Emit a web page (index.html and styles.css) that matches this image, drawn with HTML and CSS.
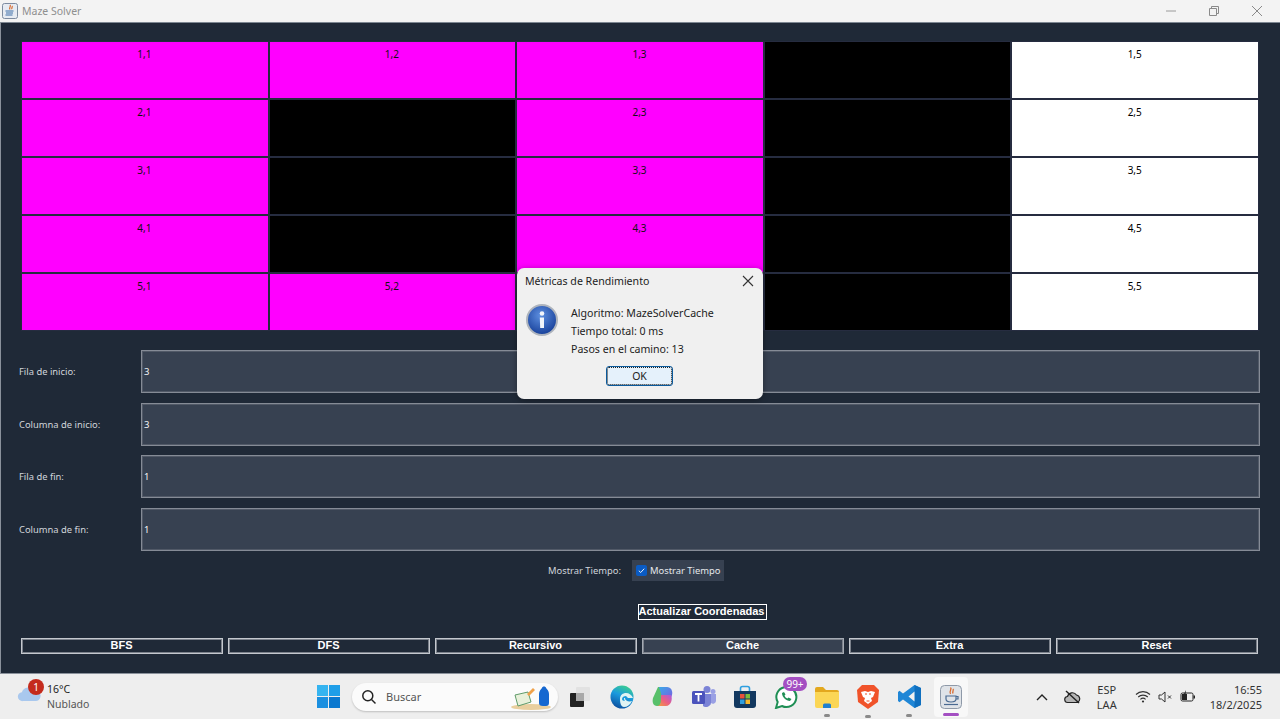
FILE: index.html
```html
<!DOCTYPE html>
<html lang="es">
<head>
  <meta charset="UTF-8">
  <title>Maze Solver</title>
  <link rel="stylesheet" href="styles.css">
</head>
<body>

  <header class="titlebar">
    <svg class="app-icon" width="16" height="16" viewBox="0 0 16 16">
      <rect x="0.500" y="0.500" width="15" height="15" rx="2" fill="#e6ebf2" stroke="#7d8ba0"/>
      <path d="M8 2c1.500 1.500-1.500 2.500 0 4.500M10 3c1 1-1 2 0 3.200" fill="none" stroke="#d9682a" stroke-width="1.200"/>
      <path d="M3.500 8h8M4 10h7M3.500 12h7" stroke="#3c6ea8" stroke-width="1.100"/>
    </svg>
    <span class="app-title">Maze Solver</span>
    <div class="win-controls">
      <svg width="12" height="12" viewBox="0 0 12 12"><path d="M1 6h10" stroke="#9a9a9a"/></svg>
      <svg width="12" height="12" viewBox="0 0 12 12"><path d="M1.500 3.500h7v7h-7zM3.500 3.500v-2h7v7h-2" fill="none" stroke="#8a8a8a"/></svg>
      <svg width="12" height="12" viewBox="0 0 12 12"><path d="M1 1l10 10M11 1L1 11" stroke="#8a8a8a"/></svg>
    </div>
  </header>

  <main class="window">
    <div class="maze">
      <div class="cell path">1,1</div>
      <div class="cell path">1,2</div>
      <div class="cell path">1,3</div>
      <div class="cell wall"></div>
      <div class="cell open">1,5</div>

      <div class="cell path">2,1</div>
      <div class="cell wall"></div>
      <div class="cell path">2,3</div>
      <div class="cell wall"></div>
      <div class="cell open">2,5</div>

      <div class="cell path">3,1</div>
      <div class="cell wall"></div>
      <div class="cell path">3,3</div>
      <div class="cell wall"></div>
      <div class="cell open">3,5</div>

      <div class="cell path">4,1</div>
      <div class="cell wall"></div>
      <div class="cell path">4,3</div>
      <div class="cell wall"></div>
      <div class="cell open">4,5</div>

      <div class="cell path">5,1</div>
      <div class="cell path">5,2</div>
      <div class="cell path"></div>
      <div class="cell wall"></div>
      <div class="cell open">5,5</div>
    </div>

    <div class="coords">
      <label>Fila de inicio:</label>
      <div class="field">3</div>
      <label>Columna de inicio:</label>
      <div class="field">3</div>
      <label>Fila de fin:</label>
      <div class="field">1</div>
      <label>Columna de fin:</label>
      <div class="field">1</div>
    </div>

    <div class="time-row">
      <span>Mostrar Tiempo:</span>
      <div class="check-box">
        <svg width="11" height="11" viewBox="0 0 11 11">
          <rect width="11" height="11" rx="2" fill="#0a5bc4"/>
          <path d="M2.800 5.700l1.900 1.800 3.500-3.800" fill="none" stroke="#e8f0fb"/>
        </svg>
        <span>Mostrar Tiempo</span>
      </div>
    </div>

    <div class="update-row">
      <button class="btn update-btn">Actualizar Coordenadas</button>
    </div>

    <div class="actions">
      <button class="btn">BFS</button>
      <button class="btn">DFS</button>
      <button class="btn">Recursivo</button>
      <button class="btn hover">Cache</button>
      <button class="btn">Extra</button>
      <button class="btn">Reset</button>
    </div>
  </main>

  <div class="dialog">
    <div class="dialog-title">
      <span>Métricas de Rendimiento</span>
      <svg width="12" height="12" viewBox="0 0 12 12"><path d="M1 1l10 10M11 1L1 11" stroke="#333" stroke-width="1.100"/></svg>
    </div>
    <div class="dialog-body">
      <svg class="info-icon" width="32" height="32" viewBox="0 0 32 32">
        <defs>
          <radialGradient id="infoBlue" cx="45%" cy="35%" r="70%">
            <stop offset="0" stop-color="#5d8fe0"/>
            <stop offset="1" stop-color="#123a94"/>
          </radialGradient>
        </defs>
        <circle cx="16" cy="16" r="15" fill="url(#infoBlue)" stroke="#aeb4bd" stroke-width="2"/>
        <circle cx="16" cy="9.500" r="2.300" fill="#f2f5fa"/>
        <path d="M13.800 13.500h4.200v10.500h-3.800z" fill="#f2f5fa"/>
      </svg>
      <div class="dialog-text">
        <p>Algoritmo: MazeSolverCache</p>
        <p>Tiempo total: 0 ms</p>
        <p>Pasos en el camino: 13</p>
      </div>
    </div>
    <button class="ok-btn">OK</button>
  </div>

  <footer class="taskbar">
    <div class="weather">
      <svg class="cloud" width="24" height="16" viewBox="0 0 26 18">
        <path d="M6 17a5 5 0 0 1-1-10 8 8 0 0 1 14-2 6 6 0 0 1 2 12z" fill="#a9c8ee"/>
      </svg>
      <span class="weather-badge">1</span>
      <div class="weather-text">
        <div class="temp">16°C</div>
        <div class="sky">Nublado</div>
      </div>
    </div>

    <div class="apps">
      <svg class="start" width="23" height="23" viewBox="0 0 23 23">
        <rect width="11" height="11" fill="#35b4f0"/>
        <rect x="12" width="11" height="11" fill="#1f9ee8"/>
        <rect y="12" width="11" height="11" fill="#1a8fe0"/>
        <rect x="12" y="12" width="11" height="11" fill="#0b78cf"/>
      </svg>

      <div class="search">
        <svg width="16" height="16" viewBox="0 0 16 16">
          <circle cx="6.800" cy="6.800" r="5" fill="none" stroke="#222" stroke-width="1.500"/>
          <path d="M10.500 10.500l4 4" stroke="#222" stroke-width="1.500"/>
        </svg>
        <span>Buscar</span>
        <svg class="search-art" width="44" height="26" viewBox="0 0 44 26">
          <ellipse cx="20" cy="23" rx="20" ry="3" fill="#e9cf9f"/>
          <path d="M4 11l13-3 3 10-13 4z" fill="#e8f0da" stroke="#5f9b6a"/>
          <path d="M16 10l6-6 2 2-6 6z" fill="#f0a24a"/>
          <path d="M32 22c-3 0-4-1-4-3v-9c0-3 2-5 3-6 0-2 4-2 4 0 1 1 3 3 3 6v9c0 2-1 3-3 3z" fill="#1668d0"/>
        </svg>
      </div>

      <svg class="task-view" width="24" height="24" viewBox="0 0 24 24">
        <rect x="8" y="2" width="14" height="14" rx="1" fill="#e2e2e2"/>
        <rect x="2" y="8" width="14" height="14" rx="1" fill="#222"/>
        <rect x="8" y="8" width="8" height="8" fill="#a8a8a8"/>
      </svg>

      <svg width="24" height="24" viewBox="0 0 24 24">
        <defs>
          <linearGradient id="edgeGrad" x1="0.700" y1="0" x2="0.300" y2="1">
            <stop offset="0" stop-color="#3ccf8e"/>
            <stop offset="0.450" stop-color="#1a9ade"/>
            <stop offset="1" stop-color="#0c4f9e"/>
          </linearGradient>
        </defs>
        <circle cx="12" cy="12" r="11.500" fill="url(#edgeGrad)"/>
        <path d="M10 14c0-4 3-6 6-6 3 0 6 2 7 5h-8c0 3 4 4 7 3-2 4-5 6-8 6-3 0-4-4-4-8z" fill="#dff3f3"/>
        <path d="M12 14c0-2 2-3 4-3l2 2h-4c0 1 0 2 1 3-2 0-3-1-3-2z" fill="#1a9ade"/>
      </svg>

      <svg width="24" height="24" viewBox="0 0 24 24">
        <defs>
          <linearGradient id="copA" x1="0" y1="0" x2="1" y2="1">
            <stop offset="0" stop-color="#3aa9e8"/>
            <stop offset="1" stop-color="#7b5be0"/>
          </linearGradient>
          <linearGradient id="copB" x1="0" y1="1" x2="1" y2="0">
            <stop offset="0" stop-color="#f3a13a"/>
            <stop offset="0.500" stop-color="#ec5f80"/>
            <stop offset="1" stop-color="#a85ae0"/>
          </linearGradient>
        </defs>
        <path d="M7 2h8l-3 10-3 9H6C2 21 1 17 2 13z" fill="#58c06a"/>
        <path d="M8 2h8c4 0 6 4 5 8l-2 5h-7z" fill="url(#copA)"/>
        <path d="M10 10h10c2 4 0 11-5 11H6c4 0 4-4 4-11z" fill="url(#copB)"/>
      </svg>

      <svg width="24" height="24" viewBox="0 0 24 24">
        <circle cx="15" cy="4.500" r="3.500" fill="#7b83d6"/>
        <circle cx="21" cy="6.500" r="2.500" fill="#9aa0e4"/>
        <path d="M11 9h8v9a5 5 0 0 1-8 3z" fill="#7b83d6"/>
        <path d="M19 9h5v7a3 3 0 0 1-5 2z" fill="#9aa0e4"/>
        <rect x="0" y="6" width="13" height="13" rx="1.500" fill="#4b53bc"/>
        <path d="M3 9h7M6.500 9v7.500" stroke="#fff" stroke-width="1.800"/>
      </svg>

      <svg width="24" height="24" viewBox="0 0 24 24">
        <path d="M7.500 6V3.500a2 2 0 0 1 2-2h5a2 2 0 0 1 2 2V6" fill="none" stroke="#2f9fe0" stroke-width="1.600"/>
        <path d="M1 6h22v14a3 3 0 0 1-3 3H4a3 3 0 0 1-3-3z" fill="#12385f"/>
        <rect x="7" y="9" width="4.500" height="4.500" fill="#e8503a"/>
        <rect x="12.500" y="9" width="4.500" height="4.500" fill="#7cba3a"/>
        <rect x="7" y="14.500" width="4.500" height="4.500" fill="#2f9fe0"/>
        <rect x="12.500" y="14.500" width="4.500" height="4.500" fill="#f5b82e"/>
      </svg>

      <div class="whatsapp">
        <svg width="24" height="24" viewBox="0 0 24 24">
          <path d="M2 23l1.700-6A10 10 0 1 1 8 21z" fill="#fff" stroke="#1f8f55" stroke-width="2"/>
          <path d="M8 8c0 4 4 8 8 8l1.500-2-3-1.500-1 1c-1.500-.5-2.500-1.500-3-3l1-1L10 7z" fill="#1f8f55"/>
        </svg>
        <span class="count-badge">99+</span>
      </div>

      <div class="pinned">
        <svg width="24" height="22" viewBox="0 0 24 22">
          <path d="M0 3a2 2 0 0 1 2-2h6l3 3h11a2 2 0 0 1 2 2v3H0z" fill="#e3a81e"/>
          <path d="M0 6h24v14a2 2 0 0 1-2 2H2a2 2 0 0 1-2-2z" fill="#fbd655"/>
          <path d="M8 22v-3a1.500 1.500 0 0 1 1.500-1.500h5A1.500 1.500 0 0 1 16 19v3z" fill="#1f7fd0"/>
        </svg>
      </div>

      <div class="pinned">
        <svg width="22" height="25" viewBox="0 0 22 25">
          <path d="M5 1h12l3 3 2 2-1 12-10 7-10-7L0 6l2-2z" fill="#f0532a"/>
          <path d="M4 8l4-1 3 1 3-1 4 1-2 5-2 1 1 3-4 3-4-3 1-3-2-1z" fill="#fff"/>
          <path d="M8 10h2M12 10h2M9.500 17h3" stroke="#f0532a" stroke-width="1.200"/>
        </svg>
      </div>

      <div class="pinned">
        <svg width="23" height="23" viewBox="0 0 23 23">
          <path d="M16.500 0L23 3v17l-6.500 3L5 14.500l-3.500 2.700L0 16V7l1.500-1.200L5 8.500z" fill="#1f86d6"/>
          <path d="M16.500 0L23 3v17l-6.500 3z" fill="#0f6fbf"/>
          <path d="M16.500 6.500l-6 5 6 5z" fill="#f0f0f0"/>
        </svg>
      </div>

      <div class="active-app">
        <svg width="22" height="24" viewBox="0 0 22 24">
          <rect x="0.500" y="0.500" width="21" height="23" rx="4" fill="#dfe3e8" stroke="#8e99a8"/>
          <path d="M10.500 2.500c2 2-2 3.500 0 6.500M13 4c1 1.200-1 2.500 0 4.500" fill="none" stroke="#d9682a" stroke-width="1.300"/>
          <path d="M6 11h10v3c0 2-2 3-5 3s-5-1-5-3zM16 11.500h2v2.500h-2" fill="none" stroke="#4a6a92" stroke-width="1.200"/>
          <path d="M4 19.500h14" stroke="#4a6a92" stroke-width="1.200"/>
        </svg>
      </div>
    </div>

    <div class="tray">
      <svg width="12" height="8" viewBox="0 0 12 8"><path d="M1 7l5-5 5 5" fill="none" stroke="#222" stroke-width="1.400"/></svg>
      <svg class="tray-cloud" width="17" height="14" viewBox="0 0 17 14">
        <path d="M4 12.500a3 3 0 0 1-.5-6 5 5 0 0 1 9-1.500 4 4 0 0 1 1 7.500z" fill="#b5b5b5" stroke="#222" stroke-width="1.200"/>
        <path d="M2 1l13 12" stroke="#222" stroke-width="1.400"/>
      </svg>
      <div class="lang">ESP<br>LAA</div>
      <svg class="wifi" width="16" height="13" viewBox="0 0 16 13">
        <path d="M1 4.500a10 10 0 0 1 14 0M3.200 7a7 7 0 0 1 9.600 0M5.400 9.300a4 4 0 0 1 5.200 0" fill="none" stroke="#333" stroke-width="1.100"/>
        <circle cx="8" cy="11.500" r="1.100" fill="#333"/>
      </svg>
      <svg class="volume" width="15" height="12" viewBox="0 0 15 12">
        <path d="M1 4h2.500L7 1v10L3.500 8H1z" fill="none" stroke="#333"/>
        <path d="M10 4.500l3 3M13 4.500l-3 3" stroke="#333"/>
      </svg>
      <svg class="battery" width="16" height="13" viewBox="0 0 16 13">
        <rect x="1" y="3" width="12" height="8" rx="1.500" fill="none" stroke="#222"/>
        <rect x="2" y="4" width="5" height="6" fill="#222"/>
        <rect x="13.500" y="5.500" width="1.500" height="3" fill="#222"/>
        <path d="M6 0L3.500 5h3L5 9" fill="#222"/>
      </svg>
      <div class="clock">16:55<br>18/2/2025</div>
    </div>
  </footer>

</body>
</html>
```

FILE: styles.css
```css
* {
  margin: 0;
  padding: 0;
  box-sizing: border-box;
}

body {
  width: 1280px;
  height: 719px;
  overflow: hidden;
  position: relative;
  background-color: #eeeeee;
  font-family: "Noto Sans", sans-serif;
  display: flex;
  flex-direction: column;
}

.titlebar {
  height: 22px;
  background-color: #f3f3f3;
  display: flex;
  align-items: center;
  padding-left: 2px;
  flex-shrink: 0;
}

.app-title {
  margin-left: 4px;
  font-size: 10.5px;
  color: #8f8f8f;
}

.win-controls {
  margin-left: auto;
  display: flex;
  gap: 31px;
  padding-right: 17px;
}

.window {
  height: 652px;
  flex-shrink: 0;
  background-color: #1f2937;
  border: 1px solid #8a919b;
  border-top-color: #7e8792;
  border-right: none;
  padding: 18px 0 0 18px;
}

.maze {
  margin-left: 2px;
  width: 1238px;
  height: 290px;
  padding: 1px;
  display: grid;
  grid-template-columns: repeat(5, 1fr);
  grid-template-rows: repeat(5, 1fr);
  gap: 2px;
  background-color: #262c40;
}

.cell {
  text-align: center;
  font-size: 10px;
  line-height: 12px;
  padding: 6px 1px 0 0;
  color: #111;
}

.cell.path {
  background-color: #ff00ff;
}

.cell.wall {
  background-color: #000000;
}

.cell.open {
  background-color: #ffffff;
  color: #000000;
}

.coords {
  margin-top: 19px;
  width: 1241px;
  display: grid;
  grid-template-columns: 122px 1fr;
  row-gap: 9.5px;
  align-items: center;
}

.coords label {
  font-size: 9.4px;
  color: #d1d5db;
}

.field {
  height: 43px;
  background-color: #374151;
  border: 1px solid #858b96;
  box-shadow: inset 0 0 0 1px #515967;
  color: #f3f4f6;
  font-size: 9.5px;
  line-height: 41px;
  padding-left: 2px;
}

.time-row {
  margin-top: 9.5px;
  display: flex;
  justify-content: center;
  align-items: center;
  gap: 11px;
  padding-right: 27px;
  font-size: 9.4px;
  color: #d1d5db;
  white-space: nowrap;
}

.check-box {
  height: 21px;
  width: 92px;
  background-color: #374151;
  display: flex;
  align-items: center;
  gap: 3px;
  padding-left: 4px;
  color: #e5e7eb;
}

.btn {
  height: 16px;
  background-color: #1f2937;
  border: 1px solid #c4c8ce;
  box-shadow: inset 0 0 0 1px #7b818b;
  color: #ffffff;
  font-family: "Liberation Sans", sans-serif;
  font-size: 11px;
  font-weight: bold;
  line-height: 12px;
  padding: 0 1px 2px 0;
}

.btn.hover {
  background-color: #374151;
  border-color: #a4aab3;
}

.update-row {
  margin-top: 23px;
  width: 1241px;
  padding-left: 125px;
  display: flex;
  justify-content: center;
}

.update-btn {
  width: 129px;
  border-color: #ffffff;
  box-shadow: none;
  white-space: nowrap;
}

.actions {
  margin-top: 18px;
  margin-left: 2px;
  width: 1237px;
  display: grid;
  grid-template-columns: repeat(6, 1fr);
  gap: 5px;
}

.dialog {
  position: absolute;
  left: 517px;
  top: 268px;
  width: 246px;
  height: 131px;
  background-color: #f0f0f0;
  border-radius: 7px;
  box-shadow: 0 1px 6px rgba(0, 0, 0, 0.35);
  color: #222;
  font-size: 10.6px;
}

.dialog-title {
  display: flex;
  justify-content: space-between;
  align-items: center;
  padding: 5px 9px 0 8px;
  font-size: 10.6px;
  height: 20px;
}

.dialog-body {
  display: flex;
  padding: 16px 0 0 9px;
}

.info-icon {
  flex-shrink: 0;
}

.dialog-text {
  margin-left: 13px;
  line-height: 18px;
}

.ok-btn {
  position: absolute;
  left: 89px;
  top: 98px;
  width: 67px;
  height: 20px;
  background-color: #e5f1fb;
  border: 1px solid #0a5a9c;
  border-radius: 3px;
  outline: 1px dotted #222;
  outline-offset: -2px;
  font-family: "Noto Sans", sans-serif;
  font-size: 10.5px;
  color: #222;
}

.taskbar {
  flex: 1;
  display: flex;
  align-items: center;
  position: relative;
}

.weather {
  width: 317px;
  display: flex;
  align-items: center;
  padding-left: 17px;
  position: relative;
}

.cloud {
  margin-top: -6px;
}

.weather-badge {
  position: absolute;
  left: 28px;
  top: -3px;
  width: 16px;
  height: 16px;
  border-radius: 50%;
  background-color: #c42b1c;
  color: #fff;
  font-size: 10px;
  line-height: 16px;
  text-align: center;
}

.weather-text {
  margin-left: 6px;
  font-size: 10.5px;
  line-height: 15px;
}

.temp {
  color: #222;
}

.sky {
  color: #555;
}

.apps {
  display: flex;
  align-items: center;
  width: 651px;
  height: 45px;
}

.apps > svg,
.apps > div {
  flex-shrink: 0;
  margin-right: 17px;
}

.apps > .start {
  margin-right: 12px;
}

.search {
  width: 206px;
  height: 28px;
  border-radius: 14px;
  background-color: #fbfbfb;
  box-shadow: 0 1px 2px rgba(0, 0, 0, 0.2);
  display: flex;
  align-items: center;
  padding-left: 9px;
  font-size: 11px;
  color: #555;
  position: relative;
}

.search span {
  margin-left: 9px;
}

.search-art {
  position: absolute;
  right: 3px;
  top: 1px;
}

.apps > .search {
  margin-right: 10px;
}

.apps > .task-view {
  margin-right: 18px;
}

.whatsapp {
  position: relative;
  width: 24px;
  height: 24px;
}

.count-badge {
  position: absolute;
  left: 9px;
  top: -8px;
  width: 24px;
  height: 14px;
  border-radius: 7px;
  background-color: #a44fc2;
  color: #fff;
  font-size: 10px;
  line-height: 14px;
  text-align: center;
}

.pinned {
  position: relative;
  width: 24px;
  display: flex;
  justify-content: center;
}

.pinned::after {
  content: "";
  position: absolute;
  left: 50%;
  bottom: -9px;
  width: 6px;
  height: 3px;
  margin-left: -3px;
  border-radius: 2px;
  background-color: #8a8a8a;
}

.active-app {
  position: relative;
  width: 34px;
  height: 40px;
  margin: 0 0 0 -4px;
  background-color: #f8f8f8;
  border-radius: 4px;
  display: flex;
  align-items: center;
  justify-content: center;
}

.active-app::after {
  content: "";
  position: absolute;
  left: 50%;
  bottom: 1px;
  width: 16px;
  height: 3px;
  margin-left: -8px;
  border-radius: 2px;
  background-color: #a44fc2;
}

.tray {
  position: absolute;
  right: 18px;
  top: 0;
  height: 45px;
  display: flex;
  align-items: center;
  color: #333;
  font-size: 11px;
}

.tray-cloud {
  margin-left: 16px;
}

.lang {
  margin-left: 15px;
  width: 22px;
  text-align: center;
  line-height: 15px;
}

.wifi {
  margin-left: 17px;
}

.volume {
  margin-left: 7px;
}

.battery {
  margin-left: 7px;
}

.clock {
  margin-left: 14px;
  text-align: right;
  line-height: 15px;
}
```
